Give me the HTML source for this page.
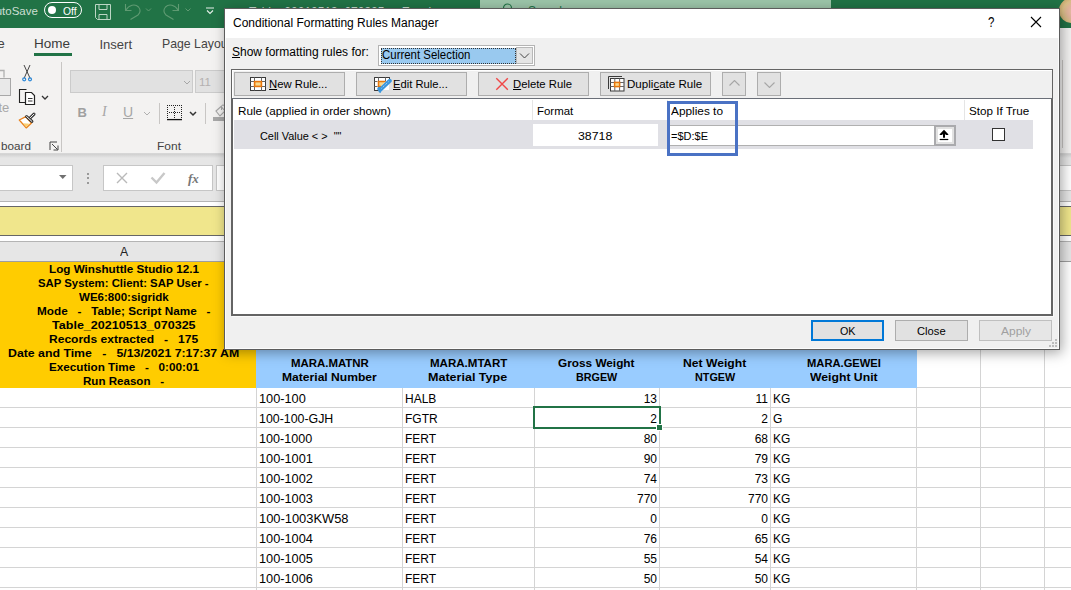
<!DOCTYPE html>
<html><head><meta charset="utf-8">
<style>
*{box-sizing:border-box;margin:0;padding:0}
html,body{width:1071px;height:590px;overflow:hidden;background:#fff;font-family:"Liberation Sans",sans-serif;position:relative}
.a{position:absolute}
.t{position:absolute;white-space:nowrap;line-height:1}
.gl{position:absolute;background:#d4d4d4}
.c{position:absolute;font-size:12px;color:#000;white-space:nowrap;line-height:20px;height:20px;margin-top:1px}
.r{text-align:right}
.btn{position:absolute;background:#e1e1e1;border:1px solid #adadad;font-size:12px;color:#000;line-height:21px;text-align:center;white-space:nowrap}
u{text-decoration:underline;text-underline-offset:1px}
</style></head><body>
<!-- TITLE BAR -->
<div class="a" style="left:0;top:0;width:1071px;height:28px;background:#217346"></div>
<div class="a" style="left:480px;top:0;width:351px;height:8px;background:#9cc5a9"></div>
<div class="t" style="left:-12px;top:5.5px;font-size:11.5px;color:#cddfd3">AutoSave</div>
<div class="a" style="left:44px;top:2px;width:38px;height:16px;border:1.5px solid #fff;border-radius:8px"></div>
<div class="a" style="left:48px;top:6px;width:8px;height:8px;background:#fff;border-radius:50%"></div>
<div class="t" style="left:62.8px;top:6.0px;font:11px 'Liberation Sans',sans-serif;white-space:pre;transform:scaleX(0.9389);transform-origin:0 0;line-height:1;color:#fff">Off</div>
<svg class="a" style="left:94px;top:3px" width="19" height="19" viewBox="0 0 19 19"><path d="M1.5 1.5h15v15h-13l-2-2z M5 1.5v5h8v-5 M5 16.5v-5h8v5" fill="none" stroke="#bcd6c4" stroke-width="1"/></svg>
<svg class="a" style="left:120px;top:0" width="36" height="24" viewBox="0 0 36 24"><path d="M5.5 4V10.5H11.5 M6 10C9 5 15 3.5 18.5 7C21 10 20 13 18 15L10.5 19.5" fill="none" stroke="#5f9a72" stroke-width="1.1"/><path d="M26 8.5l2.5 2.5 2.5-2.5" fill="none" stroke="#5f9a72" stroke-width="1"/></svg>
<svg class="a" style="left:160px;top:0" width="36" height="24" viewBox="0 0 36 24"><path d="M18.5 4V10.5H12.5 M18 10C15 5 9 3.5 5.5 7C3 10 4 13 6 15L13.5 19.5" fill="none" stroke="#5f9a72" stroke-width="1.1"/><path d="M25.5 8.5l2.5 2.5 2.5-2.5" fill="none" stroke="#5f9a72" stroke-width="1"/></svg>
<svg class="a" style="left:205px;top:7px" width="10" height="8" viewBox="0 0 10 8"><path d="M1 1h8 M2 3.5l3 3 3-3" fill="none" stroke="#e8f0ea" stroke-width="1.1"/></svg>
<div class="t" style="left:249px;top:5.5px;font-size:12px;color:#c9ddd0">Table_20210513_070325 &nbsp;-&nbsp; Excel</div>
<svg class="a" style="left:500px;top:1px" width="16" height="10" viewBox="0 0 16 10"><circle cx="7.5" cy="7" r="4" fill="none" stroke="#217346" stroke-width="1.2"/></svg>
<div class="t" style="left:528px;top:4.5px;font-size:12px;color:#217346">Search</div>
<div class="a" style="left:1059px;top:-2px;width:25px;height:25px;border-radius:50%;background:radial-gradient(circle at 60% 55%,#e9c0a8 0,#e2b49c 30%,#d8bd86 55%,#c9a86e 75%,#b89660 100%)"></div>

<!-- RIBBON -->
<div class="a" style="left:0;top:28px;width:1071px;height:126px;background:#f3f2f1"></div>
<div class="t" style="left:-17px;top:37px;font-size:13.5px;color:#444">File</div>
<div class="t" style="left:34px;top:37px;font-size:13.5px;color:#3b3b3b">Home</div>
<div class="a" style="left:34px;top:53px;width:38px;height:3px;background:#217346"></div>
<div class="t" style="left:99.5px;top:37.5px;font-size:13px;color:#444">Insert</div>
<div class="t" style="left:162.0px;top:37.0px;font:13.5px 'Liberation Sans',sans-serif;white-space:pre;transform:scaleX(0.9101);transform-origin:0 0;line-height:1;color:#444">Page Layout</div>
<!-- clipboard -->
<div class="a" style="left:-3px;top:78px;width:14px;height:18px;border:1px solid #a8a8a8;background:#e9e9e9"></div><svg class="a" style="left:0;top:68px" width="8" height="10" viewBox="0 0 8 10"><path d="M-3 9.5V2.5h7v7" fill="none" stroke="#b0b0b0" stroke-width="1.3"/></svg>
<div class="t" style="left:-24px;top:101px;font-size:13px;color:#a8a8a8">Paste</div>
<svg class="a" style="left:20px;top:63px" width="16" height="20" viewBox="0 0 16 20"><path d="M4 2l6.2 13.5 M10 2l-6 13.5" stroke="#444" stroke-width="1" fill="none"/><circle cx="4.2" cy="16.3" r="1.5" fill="none" stroke="#2b88d8" stroke-width="1.2"/><circle cx="10" cy="16.3" r="1.5" fill="none" stroke="#2b88d8" stroke-width="1.2"/></svg>
<svg class="a" style="left:18px;top:88px" width="34" height="18" viewBox="0 0 34 18"><path d="M8.5 1.5H1.5v13H7" fill="none" stroke="#222" stroke-width="1.1"/><path d="M7.5 4.5h6l3 3v9h-9z" fill="#fff" stroke="#222" stroke-width="1.2"/><path d="M10 10.5h4.5 M10 13h4.5" stroke="#333" stroke-width="1"/><path d="M24 8l3 3 3-3" fill="none" stroke="#333" stroke-width="1.3"/></svg>
<svg class="a" style="left:14px;top:108px" width="26" height="24" viewBox="0 0 26 24"><path d="M5.3 12L11.8 8.7 17.5 15 12.2 19.9Z" fill="#fff" stroke="#e8801c" stroke-width="1.3" stroke-linejoin="round"/><path d="M9 15.2L15.6 15.8 12.2 19.2Z" fill="#f9cf72"/><path d="M15.8 10.3L20 6.1" stroke="#333" stroke-width="3" stroke-linecap="round"/><path d="M15.8 10.3L20 6.1" stroke="#fff" stroke-width="1" stroke-linecap="round"/><path d="M12.6 8.5L17.9 13.4" stroke="#333" stroke-width="3" stroke-linecap="round"/><path d="M12.6 8.5L17.9 13.4" stroke="#fff" stroke-width="1" stroke-linecap="round"/></svg>
<div class="t" style="left:0.6px;top:141.2px;font:11px 'Liberation Sans',sans-serif;white-space:pre;transform:scaleX(1.0625);transform-origin:0 0;line-height:1;color:#444">board</div>
<svg class="a" style="left:49px;top:141px" width="10" height="10" viewBox="0 0 10 10"><path d="M1 9V1h7" fill="none" stroke="#444" stroke-width="1"/><path d="M3 3l5.5 5.5 M9 4.5v4.5H4.5" fill="none" stroke="#444" stroke-width="1"/></svg>
<div class="a" style="left:61px;top:62px;width:1px;height:90px;background:#c8c6c4"></div>
<!-- font group -->
<div class="a" style="left:70px;top:70px;width:123px;height:23px;background:#e1e1e1;border:1px solid #cbcbcb"></div>
<svg class="a" style="left:183px;top:80px" width="8" height="5" viewBox="0 0 8 5"><path d="M1 1l3 3 3-3" fill="none" stroke="#a6a6a6"/></svg>
<div class="a" style="left:195px;top:70px;width:40px;height:23px;background:#e1e1e1;border:1px solid #cbcbcb"></div>
<div class="t" style="left:199px;top:76.5px;font-size:11.5px;color:#b4b0b0">11</div>
<div class="t" style="left:77.5px;top:106px;font-size:13px;font-weight:bold;color:#a0a0a0">B</div>
<div class="t" style="left:102px;top:105px;font-size:14px;font-style:italic;color:#a6a6a6;font-family:'Liberation Serif',serif">I</div>
<div class="t" style="left:123px;top:105px;font-size:14px;color:#a6a6a6;text-decoration:underline">U</div>
<svg class="a" style="left:143px;top:111px" width="8" height="5" viewBox="0 0 8 5"><path d="M1 1l3 3 3-3" fill="none" stroke="#b0b0b0"/></svg>
<div class="a" style="left:159px;top:103px;width:1px;height:21px;background:#c8c6c4"></div>
<svg class="a" style="left:167px;top:105px" width="16" height="16" viewBox="0 0 16 16"><g fill="#222"><rect x="4" y="0" width="1" height="1"/><rect x="12" y="7" width="1" height="1"/><rect x="14" y="4" width="1" height="1"/><rect x="14" y="10" width="1" height="1"/><rect x="8" y="0" width="1" height="1"/><rect x="0" y="2" width="1" height="1"/><rect x="10" y="0" width="1" height="1"/><rect x="0" y="8" width="1" height="1"/><rect x="7" y="4" width="1" height="1"/><rect x="7" y="10" width="1" height="1"/><rect x="12" y="0" width="1" height="1"/><rect x="14" y="0" width="1" height="1"/><rect x="14" y="6" width="1" height="1"/><rect x="14" y="12" width="1" height="1"/><rect x="0" y="4" width="1" height="1"/><rect x="0" y="10" width="1" height="1"/><rect x="2" y="7" width="1" height="1"/><rect x="6" y="7" width="1" height="1"/><rect x="7" y="6" width="1" height="1"/><rect x="7" y="12" width="1" height="1"/><rect x="14" y="2" width="1" height="1"/><rect x="4" y="7" width="1" height="1"/><rect x="14" y="8" width="1" height="1"/><rect x="0" y="0" width="1" height="1"/><rect x="8" y="7" width="1" height="1"/><rect x="2" y="0" width="1" height="1"/><rect x="10" y="7" width="1" height="1"/><rect x="0" y="6" width="1" height="1"/><rect x="0" y="12" width="1" height="1"/><rect x="7" y="2" width="1" height="1"/><rect x="6" y="0" width="1" height="1"/><rect x="7" y="8" width="1" height="1"/></g><path d="M0 14.6h15" stroke="#111" stroke-width="1.3"/></svg>
<svg class="a" style="left:189px;top:111px" width="8" height="6" viewBox="0 0 8 6"><path d="M1 1l3 3 3-3" fill="none" stroke="#333" stroke-width="1.5"/></svg>
<div class="a" style="left:205px;top:103px;width:1px;height:21px;background:#c8c6c4"></div>
<svg class="a" style="left:212px;top:104px" width="14" height="18" viewBox="0 0 14 18"><path d="M4 7l5-4.5 4 4.5-5 5z" fill="none" stroke="#a6a6a6" stroke-width="1.1"/><path d="M9.5 6V2.5a1.5 1.5 0 0 1 3 0V6" fill="none" stroke="#a6a6a6"/><rect x="1" y="13" width="13" height="4" fill="#a8a8a8"/></svg>
<div class="t" style="left:157.3px;top:141.2px;font:11px 'Liberation Sans',sans-serif;white-space:pre;transform:scaleX(1.0901);transform-origin:0 0;line-height:1;color:#444">Font</div>
<div class="a" style="left:1062px;top:60px;width:1px;height:88px;background:#c8c6c4"></div>
<div class="a" style="left:0;top:153px;width:1071px;height:1px;background:#d6d6d6"></div>

<!-- FORMULA BAR -->
<div class="a" style="left:0;top:154px;width:1071px;height:47px;background:#e6e6e6"></div>
<div class="a" style="left:0;top:154px;width:1071px;height:4px;background:linear-gradient(#d0d0d0,#e6e6e6)"></div>
<div class="a" style="left:-2px;top:165px;width:75px;height:26px;background:#fff;border:1px solid #c6c6c6"></div>
<svg class="a" style="left:59px;top:175px" width="8" height="5" viewBox="0 0 8 5"><path d="M0 0h7.5l-3.75 4z" fill="#707070"/></svg>
<div class="a" style="left:87px;top:172.5px;width:2px;height:2px;background:#999"></div>
<div class="a" style="left:87px;top:177px;width:2px;height:2px;background:#999"></div>
<div class="a" style="left:87px;top:181.5px;width:2px;height:2px;background:#999"></div>
<div class="a" style="left:103px;top:165px;width:110px;height:26px;background:#fff;border:1px solid #c6c6c6"></div>
<svg class="a" style="left:115px;top:171px" width="14" height="14" viewBox="0 0 14 14"><path d="M2 2l10 10 M12 2L2 12" stroke="#b9b9b9" stroke-width="1.4"/></svg>
<svg class="a" style="left:150px;top:171px" width="16" height="14" viewBox="0 0 16 14"><path d="M1.5 6.5l5 5 8-9.5" fill="none" stroke="#c8c8c8" stroke-width="2.4"/></svg>
<div class="t" style="left:188px;top:172px;font-size:13px;font-style:italic;font-weight:bold;color:#777;font-family:'Liberation Serif',serif">fx</div>
<div class="a" style="left:216px;top:165px;width:900px;height:26px;background:#fff;border:1px solid #c6c6c6"></div>
<div class="a" style="left:0;top:201px;width:1071px;height:1px;background:#b4b4b4"></div>
<div class="a" style="left:0;top:202px;width:1071px;height:4px;background:#fff"></div>
<div class="a" style="left:0;top:206px;width:1071px;height:1px;background:#666"></div>
<div class="a" style="left:0;top:207px;width:1071px;height:28px;background:#f0e68c"></div>
<div class="a" style="left:0;top:235px;width:1071px;height:1px;background:#666"></div>
<div class="a" style="left:0;top:236px;width:1071px;height:5px;background:#fff"></div>
<div class="a" style="left:0;top:241px;width:1071px;height:1px;background:#b4b4b4"></div>
<!-- column headers -->
<div class="a" style="left:0;top:242px;width:1071px;height:19px;background:#e6e6e6"></div>
<div class="a" style="left:0;top:261px;width:1071px;height:1px;background:#9e9e9e"></div>
<div class="t" style="left:120.0px;top:245.8px;font:12px 'Liberation Sans',sans-serif;white-space:pre;transform:scaleX(1.0230);transform-origin:0 0;line-height:1;color:#222">A</div>

<!-- SHEET -->
<div class="a" style="left:0;top:262px;width:256px;height:126px;background:#ffcc00"></div>
<div class="t" style="left:49.0px;top:264.0px;font:bold 11.5px 'Liberation Sans',sans-serif;white-space:pre;transform:scaleX(1.0164);transform-origin:0 0;line-height:1;color:#000">Log Winshuttle Studio 12.1</div>
<div class="t" style="left:38.0px;top:278.0px;font:bold 11.5px 'Liberation Sans',sans-serif;white-space:pre;transform:scaleX(0.9874);transform-origin:0 0;line-height:1;color:#000">SAP System: Client: SAP User -</div>
<div class="t" style="left:78.7px;top:292.0px;font:bold 11.5px 'Liberation Sans',sans-serif;white-space:pre;transform:scaleX(1.0035);transform-origin:0 0;line-height:1;color:#000">WE6:800:sigridk</div>
<div class="t" style="left:36.9px;top:306.0px;font:bold 11.5px 'Liberation Sans',sans-serif;white-space:pre;transform:scaleX(1.0214);transform-origin:0 0;line-height:1;color:#000">Mode   -   Table; Script Name   -</div>
<div class="t" style="left:51.8px;top:320.0px;font:bold 11.5px 'Liberation Sans',sans-serif;white-space:pre;transform:scaleX(1.0919);transform-origin:0 0;line-height:1;color:#000">Table_20210513_070325</div>
<div class="t" style="left:49.0px;top:334.0px;font:bold 11.5px 'Liberation Sans',sans-serif;white-space:pre;transform:scaleX(1.0467);transform-origin:0 0;line-height:1;color:#000">Records extracted   -   175</div>
<div class="t" style="left:7.800000000000001px;top:348.0px;font:bold 11.5px 'Liberation Sans',sans-serif;white-space:pre;transform:scaleX(1.0701);transform-origin:0 0;line-height:1;color:#000">Date and Time   -   5/13/2021 7:17:37 AM</div>
<div class="t" style="left:49.0px;top:362.0px;font:bold 11.5px 'Liberation Sans',sans-serif;white-space:pre;transform:scaleX(1.0167);transform-origin:0 0;line-height:1;color:#000">Execution Time   -   0:00:01</div>
<div class="t" style="left:83.10000000000001px;top:376.0px;font:bold 11.5px 'Liberation Sans',sans-serif;white-space:pre;transform:scaleX(1.0060);transform-origin:0 0;line-height:1;color:#000">Run Reason   -</div>
<div class="a" style="left:256px;top:262px;width:661px;height:126px;background:#99ccff"></div>
<div class="t" style="left:290.7px;top:358.17px;font:bold 11.5px 'Liberation Sans',sans-serif;white-space:pre;transform:scaleX(0.9929);transform-origin:0 0;line-height:1;color:#000">MARA.MATNR</div>
<div class="t" style="left:281.5px;top:372.17px;font:bold 11.5px 'Liberation Sans',sans-serif;white-space:pre;transform:scaleX(1.0521);transform-origin:0 0;line-height:1;color:#000">Material Number</div>
<div class="t" style="left:429.79999999999995px;top:358.17px;font:bold 11.5px 'Liberation Sans',sans-serif;white-space:pre;transform:scaleX(1.0029);transform-origin:0 0;line-height:1;color:#000">MARA.MTART</div>
<div class="t" style="left:428.4px;top:372.17px;font:bold 11.5px 'Liberation Sans',sans-serif;white-space:pre;transform:scaleX(1.0901);transform-origin:0 0;line-height:1;color:#000">Material Type</div>
<div class="t" style="left:558.4px;top:358.17px;font:bold 11.5px 'Liberation Sans',sans-serif;white-space:pre;transform:scaleX(1.0260);transform-origin:0 0;line-height:1;color:#000">Gross Weight</div>
<div class="t" style="left:576.1999999999999px;top:372.17px;font:bold 11.5px 'Liberation Sans',sans-serif;white-space:pre;transform:scaleX(0.9366);transform-origin:0 0;line-height:1;color:#000">BRGEW</div>
<div class="t" style="left:683.4px;top:358.17px;font:bold 11.5px 'Liberation Sans',sans-serif;white-space:pre;transform:scaleX(1.0561);transform-origin:0 0;line-height:1;color:#000">Net Weight</div>
<div class="t" style="left:695.1px;top:372.17px;font:bold 11.5px 'Liberation Sans',sans-serif;white-space:pre;transform:scaleX(0.9390);transform-origin:0 0;line-height:1;color:#000">NTGEW</div>
<div class="t" style="left:806.9px;top:358.17px;font:bold 11.5px 'Liberation Sans',sans-serif;white-space:pre;transform:scaleX(0.9720);transform-origin:0 0;line-height:1;color:#000">MARA.GEWEI</div>
<div class="t" style="left:810.4px;top:372.17px;font:bold 11.5px 'Liberation Sans',sans-serif;white-space:pre;transform:scaleX(1.0617);transform-origin:0 0;line-height:1;color:#000">Weight Unit</div>
<div class="a" style="left:917px;top:262px;width:154px;height:126px;background:#fff"></div>
<div class="gl" style="left:917px;top:387px;width:154px;height:1px"></div>
<div class="gl" style="left:256px;top:388px;width:1px;height:202px"></div>
<div class="gl" style="left:0;top:407px;width:1071px;height:1px"></div>
<div class="gl" style="left:0;top:427px;width:1071px;height:1px"></div>
<div class="gl" style="left:0;top:447px;width:1071px;height:1px"></div>
<div class="gl" style="left:0;top:467px;width:1071px;height:1px"></div>
<div class="gl" style="left:0;top:487px;width:1071px;height:1px"></div>
<div class="gl" style="left:0;top:507px;width:1071px;height:1px"></div>
<div class="gl" style="left:0;top:527px;width:1071px;height:1px"></div>
<div class="gl" style="left:0;top:547px;width:1071px;height:1px"></div>
<div class="gl" style="left:0;top:567px;width:1071px;height:1px"></div>
<div class="gl" style="left:0;top:587px;width:1071px;height:1px"></div>
<div class="gl" style="left:402px;top:388px;width:1px;height:202px"></div>
<div class="gl" style="left:534px;top:388px;width:1px;height:202px"></div>
<div class="gl" style="left:659px;top:388px;width:1px;height:202px"></div>
<div class="gl" style="left:770px;top:388px;width:1px;height:202px"></div>
<div class="gl" style="left:916px;top:388px;width:1px;height:202px"></div>
<div class="gl" style="left:980px;top:262px;width:1px;height:328px"></div>
<div class="gl" style="left:1044px;top:262px;width:1px;height:328px"></div>
<div class="t" style="left:259.0px;top:392.6px;font:12px 'Liberation Sans',sans-serif;white-space:pre;transform:scaleX(1.0625);transform-origin:0 0;line-height:1;color:#000">100-100</div>
<div class="c" style="left:405px;top:388px">HALB</div>
<div class="c r" style="left:533px;width:124px;top:388px">13</div>
<div class="c r" style="left:660px;width:108px;top:388px">11</div>
<div class="c" style="left:773px;top:388px">KG</div>
<div class="t" style="left:259.0px;top:412.6px;font:12px 'Liberation Sans',sans-serif;white-space:pre;transform:scaleX(1.0313);transform-origin:0 0;line-height:1;color:#000">100-100-GJH</div>
<div class="c" style="left:405px;top:408px">FGTR</div>
<div class="c r" style="left:533px;width:124px;top:408px">2</div>
<div class="c r" style="left:660px;width:108px;top:408px">2</div>
<div class="c" style="left:773px;top:408px">G</div>
<div class="t" style="left:259.0px;top:432.6px;font:12px 'Liberation Sans',sans-serif;white-space:pre;transform:scaleX(1.0509);transform-origin:0 0;line-height:1;color:#000">100-1000</div>
<div class="c" style="left:405px;top:428px">FERT</div>
<div class="c r" style="left:533px;width:124px;top:428px">80</div>
<div class="c r" style="left:660px;width:108px;top:428px">68</div>
<div class="c" style="left:773px;top:428px">KG</div>
<div class="t" style="left:259.0px;top:452.6px;font:12px 'Liberation Sans',sans-serif;white-space:pre;transform:scaleX(1.0627);transform-origin:0 0;line-height:1;color:#000">100-1001</div>
<div class="c" style="left:405px;top:448px">FERT</div>
<div class="c r" style="left:533px;width:124px;top:448px">90</div>
<div class="c r" style="left:660px;width:108px;top:448px">79</div>
<div class="c" style="left:773px;top:448px">KG</div>
<div class="t" style="left:259.0px;top:472.6px;font:12px 'Liberation Sans',sans-serif;white-space:pre;transform:scaleX(1.0627);transform-origin:0 0;line-height:1;color:#000">100-1002</div>
<div class="c" style="left:405px;top:468px">FERT</div>
<div class="c r" style="left:533px;width:124px;top:468px">74</div>
<div class="c r" style="left:660px;width:108px;top:468px">73</div>
<div class="c" style="left:773px;top:468px">KG</div>
<div class="t" style="left:259.0px;top:492.6px;font:12px 'Liberation Sans',sans-serif;white-space:pre;transform:scaleX(1.0627);transform-origin:0 0;line-height:1;color:#000">100-1003</div>
<div class="c" style="left:405px;top:488px">FERT</div>
<div class="c r" style="left:533px;width:124px;top:488px">770</div>
<div class="c r" style="left:660px;width:108px;top:488px">770</div>
<div class="c" style="left:773px;top:488px">KG</div>
<div class="t" style="left:259.0px;top:512.6px;font:12px 'Liberation Sans',sans-serif;white-space:pre;transform:scaleX(1.0733);transform-origin:0 0;line-height:1;color:#000">100-1003KW58</div>
<div class="c" style="left:405px;top:508px">FERT</div>
<div class="c r" style="left:533px;width:124px;top:508px">0</div>
<div class="c r" style="left:660px;width:108px;top:508px">0</div>
<div class="c" style="left:773px;top:508px">KG</div>
<div class="t" style="left:259.0px;top:532.6px;font:12px 'Liberation Sans',sans-serif;white-space:pre;transform:scaleX(1.0627);transform-origin:0 0;line-height:1;color:#000">100-1004</div>
<div class="c" style="left:405px;top:528px">FERT</div>
<div class="c r" style="left:533px;width:124px;top:528px">76</div>
<div class="c r" style="left:660px;width:108px;top:528px">65</div>
<div class="c" style="left:773px;top:528px">KG</div>
<div class="t" style="left:259.0px;top:552.6px;font:12px 'Liberation Sans',sans-serif;white-space:pre;transform:scaleX(1.0627);transform-origin:0 0;line-height:1;color:#000">100-1005</div>
<div class="c" style="left:405px;top:548px">FERT</div>
<div class="c r" style="left:533px;width:124px;top:548px">55</div>
<div class="c r" style="left:660px;width:108px;top:548px">54</div>
<div class="c" style="left:773px;top:548px">KG</div>
<div class="t" style="left:259.0px;top:572.6px;font:12px 'Liberation Sans',sans-serif;white-space:pre;transform:scaleX(1.0627);transform-origin:0 0;line-height:1;color:#000">100-1006</div>
<div class="c" style="left:405px;top:568px">FERT</div>
<div class="c r" style="left:533px;width:124px;top:568px">50</div>
<div class="c r" style="left:660px;width:108px;top:568px">50</div>
<div class="c" style="left:773px;top:568px">KG</div>
<div class="a" style="left:533px;top:406px;width:128px;height:23px;border:2px solid #217346"></div>
<div class="a" style="left:656px;top:424px;width:7px;height:7px;background:#217346;border:1px solid #fff"></div>

<!-- DIALOG -->
<div class="a" style="left:224px;top:8px;width:836px;height:342px;background:#f0f0f0;border:1px solid #5c5c5c;box-shadow:inset 0 0 0 1px #fcfcfc,2px 3px 12px rgba(0,0,0,.35)"></div>
<div class="a" style="left:225px;top:9px;width:834px;height:29px;background:#fff"></div>
<div class="t" style="left:233px;top:17px;font-size:12px;color:#000">Conditional Formatting Rules Manager</div>
<div class="t" style="left:988.0px;top:14.4px;font:15px 'Liberation Sans',sans-serif;white-space:pre;transform:scaleX(0.7670);transform-origin:0 0;line-height:1;color:#000">?</div>
<svg class="a" style="left:1030px;top:16px" width="12" height="12" viewBox="0 0 12 12"><path d="M1 1l10 10 M11 1L1 11" stroke="#000" stroke-width="1.1"/></svg>
<div class="t" style="left:232px;top:46px;font-size:12px;color:#000"><u>S</u>how formatting rules for:</div>
<div class="a" style="left:378px;top:45px;width:157px;height:21px;background:#fff;border:1px solid #b4b4b4"></div>
<div class="a" style="left:380.5px;top:47.5px;width:135px;height:16px;background:#99c9ef;border:1px dotted #333"></div>
<div class="t" style="left:382.3px;top:49.0px;font:12px 'Liberation Sans',sans-serif;white-space:pre;transform:scaleX(0.9534);transform-origin:0 0;line-height:1;color:#000">Current Selection</div>
<div class="a" style="left:516px;top:47px;width:17px;height:17px;background:#e5e5e5;border:1px solid #b8b8b8"></div>
<svg class="a" style="left:519px;top:53px" width="11" height="6" viewBox="0 0 11 6"><path d="M1 .5l4.5 4.5 4.5-4.5" fill="none" stroke="#444" stroke-width="1"/></svg>
<!-- group box -->
<div class="a" style="left:231px;top:69px;width:822px;height:30px;border:1px solid #646464;border-bottom:0;box-shadow:inset 1px 1px 0 #fff"></div>
<div class="btn" style="left:234px;top:72px;width:111px;height:24px"></div>
<div class="btn" style="left:356px;top:72px;width:111px;height:24px"></div>
<div class="btn" style="left:478px;top:72px;width:111px;height:24px"></div>
<div class="btn" style="left:600px;top:72px;width:111px;height:24px"></div>
<div class="t" style="left:269.0px;top:79.2px;font:11.5px 'Liberation Sans',sans-serif;white-space:pre;transform:scaleX(0.9823);transform-origin:0 0;line-height:1;color:#000"><u>N</u>ew Rule...</div>
<div class="t" style="left:393.0px;top:79.2px;font:11.5px 'Liberation Sans',sans-serif;white-space:pre;transform:scaleX(0.9742);transform-origin:0 0;line-height:1;color:#000"><u>E</u>dit Rule...</div>
<div class="t" style="left:512.8px;top:79.2px;font:11.5px 'Liberation Sans',sans-serif;white-space:pre;transform:scaleX(0.9815);transform-origin:0 0;line-height:1;color:#000"><u>D</u>elete Rule</div>
<div class="t" style="left:626.9px;top:79.2px;font:11.5px 'Liberation Sans',sans-serif;white-space:pre;transform:scaleX(1.0065);transform-origin:0 0;line-height:1;color:#000">Dupli<u>c</u>ate Rule</div>
<div class="btn" style="left:722px;top:72px;width:24px;height:24px;background:#e1e1e1;border-color:#adadad"></div>
<svg class="a" style="left:729px;top:80px" width="11" height="6" viewBox="0 0 11 6"><path d="M.5 5.5l5-5 5 5" fill="none" stroke="#a6a6a6" stroke-width="1.1"/></svg>
<div class="btn" style="left:757px;top:72px;width:24px;height:24px;background:#e1e1e1;border-color:#adadad"></div>
<svg class="a" style="left:764px;top:82px" width="11" height="6" viewBox="0 0 11 6"><path d="M.5 .5l5 5 5-5" fill="none" stroke="#a6a6a6" stroke-width="1.1"/></svg>
<!-- icons on buttons -->
<svg class="a" style="left:250px;top:77px" width="16" height="14" viewBox="0 0 16 14"><rect x=".5" y=".5" width="15" height="13" fill="#fff" stroke="#3a3a3a"/><path d="M.5 4.5h15 M.5 9.5h15 M4.5 .5v13 M11.5 .5v13" stroke="#666"/><rect x="4.6" y="4.6" width="6.8" height="4.8" fill="#f9d98c" stroke="#e8760c" stroke-width="1.6"/></svg>
<svg class="a" style="left:374px;top:77px" width="18" height="17" viewBox="0 0 18 17"><path d="M15.5 4V.5H.5v13h4" fill="#fff" stroke="#3a3a3a"/><rect x="1" y="1" width="14" height="12" fill="#fff"/><path d="M15.5 4V.5H.5v13h4" fill="none" stroke="#3a3a3a"/><path d="M.5 4.5h3 M.5 9.5h3 M4.5 .5v13 M11.5 .5v4" stroke="#666"/><path d="M11.5 4.5H4.5V9.5H7" fill="#f9d98c" stroke="#e8760c" stroke-width="1.5"/><path d="M5.3 11.8l1 1 9.5-9" stroke="#3a96dd" stroke-width="4" stroke-linecap="round"/><path d="M6.5 16l-1.6-1.6 1.4-1" fill="#3a96dd" stroke="#3a96dd"/><path d="M7.5 11.3l7-6.6" stroke="#fff" stroke-width=".7" stroke-dasharray="1 1.2"/></svg>
<svg class="a" style="left:495px;top:77px" width="14" height="14" viewBox="0 0 14 14"><path d="M1.3 1.3l11.5 11.5 M12.8 1.3L1.3 12.8" stroke="#f04848" stroke-width="1.4"/></svg>
<svg class="a" style="left:608px;top:76px" width="18" height="17" viewBox="0 0 18 17"><path d="M.5 13V.5H14" fill="none" stroke="#3a3a3a"/><rect x="2.5" y="2.5" width="13.5" height="12.5" fill="#fff" stroke="#3a3a3a"/><path d="M2.5 6.5h13.5 M2.5 10.5h13.5 M6.8 2.5v12.5 M11.6 2.5v12.5" stroke="#666"/><rect x="6.6" y="6.4" width="5" height="4.2" fill="#f9d98c" stroke="#e8760c" stroke-width="1.5"/></svg>
<!-- list -->
<div class="a" style="left:231px;top:98px;width:822px;height:218px;background:#fff;border:2px solid #646464;border-top:1px solid #6a6f78;box-shadow:1px 1px 0 #fafafa"></div>
<div class="t" style="left:238.2px;top:105.6px;font:11.5px 'Liberation Sans',sans-serif;white-space:pre;transform:scaleX(1.0185);transform-origin:0 0;line-height:1;color:#000">Rule (applied in order shown)</div>
<div class="a" style="left:532px;top:100px;width:1px;height:20px;background:#e5e5e5"></div>
<div class="t" style="left:537.0px;top:105.6px;font:11.5px 'Liberation Sans',sans-serif;white-space:pre;transform:scaleX(0.9939);transform-origin:0 0;line-height:1;color:#000">Format</div>
<div class="a" style="left:667px;top:100px;width:1px;height:20px;background:#e5e5e5"></div>
<div class="t" style="left:670.8px;top:105.6px;font:11.5px 'Liberation Sans',sans-serif;white-space:pre;transform:scaleX(1.0294);transform-origin:0 0;line-height:1;color:#000">Applies to</div>
<div class="a" style="left:964px;top:100px;width:1px;height:20px;background:#e5e5e5"></div>
<div class="t" style="left:969.0px;top:105.6px;font:11.5px 'Liberation Sans',sans-serif;white-space:pre;transform:scaleX(1.0126);transform-origin:0 0;line-height:1;color:#000">Stop If True</div>
<div class="a" style="left:234px;top:120px;width:799px;height:29px;background:#e0e0e5"></div>
<div class="t" style="left:260.0px;top:130.8px;font:11.5px 'Liberation Sans',sans-serif;white-space:pre;transform:scaleX(0.9470);transform-origin:0 0;line-height:1;color:#000">Cell Value &lt; &gt;  &quot;&quot;</div>
<div class="a" style="left:533px;top:124px;width:125px;height:22px;background:#fff"></div>
<div class="t" style="left:578.4px;top:130.8px;font:11.5px 'Liberation Sans',sans-serif;white-space:pre;transform:scaleX(1.0724);transform-origin:0 0;line-height:1;color:#000">38718</div>
<div class="a" style="left:668px;top:125px;width:268px;height:21px;background:#fff;border:1px solid #b0b0b0"></div>
<div class="t" style="left:670.9px;top:130.8px;font:11.5px 'Liberation Sans',sans-serif;white-space:pre;transform:scaleX(0.9564);transform-origin:0 0;line-height:1;color:#000">=$D:$E</div>
<div class="a" style="left:934px;top:125px;width:22px;height:21px;background:#fff;border:2px solid #aaaaad;box-shadow:inset 0 0 0 2px #e2e2e2"></div>
<svg class="a" style="left:939px;top:129px" width="10" height="12" viewBox="0 0 10 12"><path d="M5 .8L9.3 5.2V6H7L6 5v3.8H4V5L3 6H.7V5.2z" fill="#000"/><path d="M.7 10.5h8.6" stroke="#000" stroke-width="1.2"/></svg>
<div class="a" style="left:992px;top:128px;width:13px;height:13px;background:#fff;border:1px solid #333"></div>
<div class="a" style="left:667px;top:101px;width:71px;height:55px;border:3px solid #4a72c4"></div>
<!-- bottom buttons -->
<div class="btn" style="left:811px;top:320px;width:73px;height:21px;border:2px solid #0078d7"></div><div class="t" style="left:840.0px;top:326.2px;font:11.5px 'Liberation Sans',sans-serif;white-space:pre;transform:scaleX(0.9323);transform-origin:0 0;line-height:1;color:#000">OK</div>
<div class="btn" style="left:895px;top:320px;width:73px;height:21px"></div><div class="t" style="left:916.8px;top:326.2px;font:11.5px 'Liberation Sans',sans-serif;white-space:pre;transform:scaleX(0.9726);transform-origin:0 0;line-height:1;color:#000">Close</div>
<div class="btn" style="left:979px;top:320px;width:73px;height:21px;background:#e6e6e6;border-color:#bfbfbf"></div><div class="t" style="left:1000.6px;top:326.2px;font:11.5px 'Liberation Sans',sans-serif;white-space:pre;transform:scaleX(1.0423);transform-origin:0 0;line-height:1;color:#a0a0a0">Apply</div>
<svg class="a" style="left:1048px;top:338px" width="10" height="10" viewBox="0 0 10 10"><g fill="#bdbdbd"><rect x="7" y="1" width="2" height="2"/><rect x="4" y="4" width="2" height="2"/><rect x="7" y="4" width="2" height="2"/><rect x="1" y="7" width="2" height="2"/><rect x="4" y="7" width="2" height="2"/><rect x="7" y="7" width="2" height="2"/></g></svg>
</body></html>
